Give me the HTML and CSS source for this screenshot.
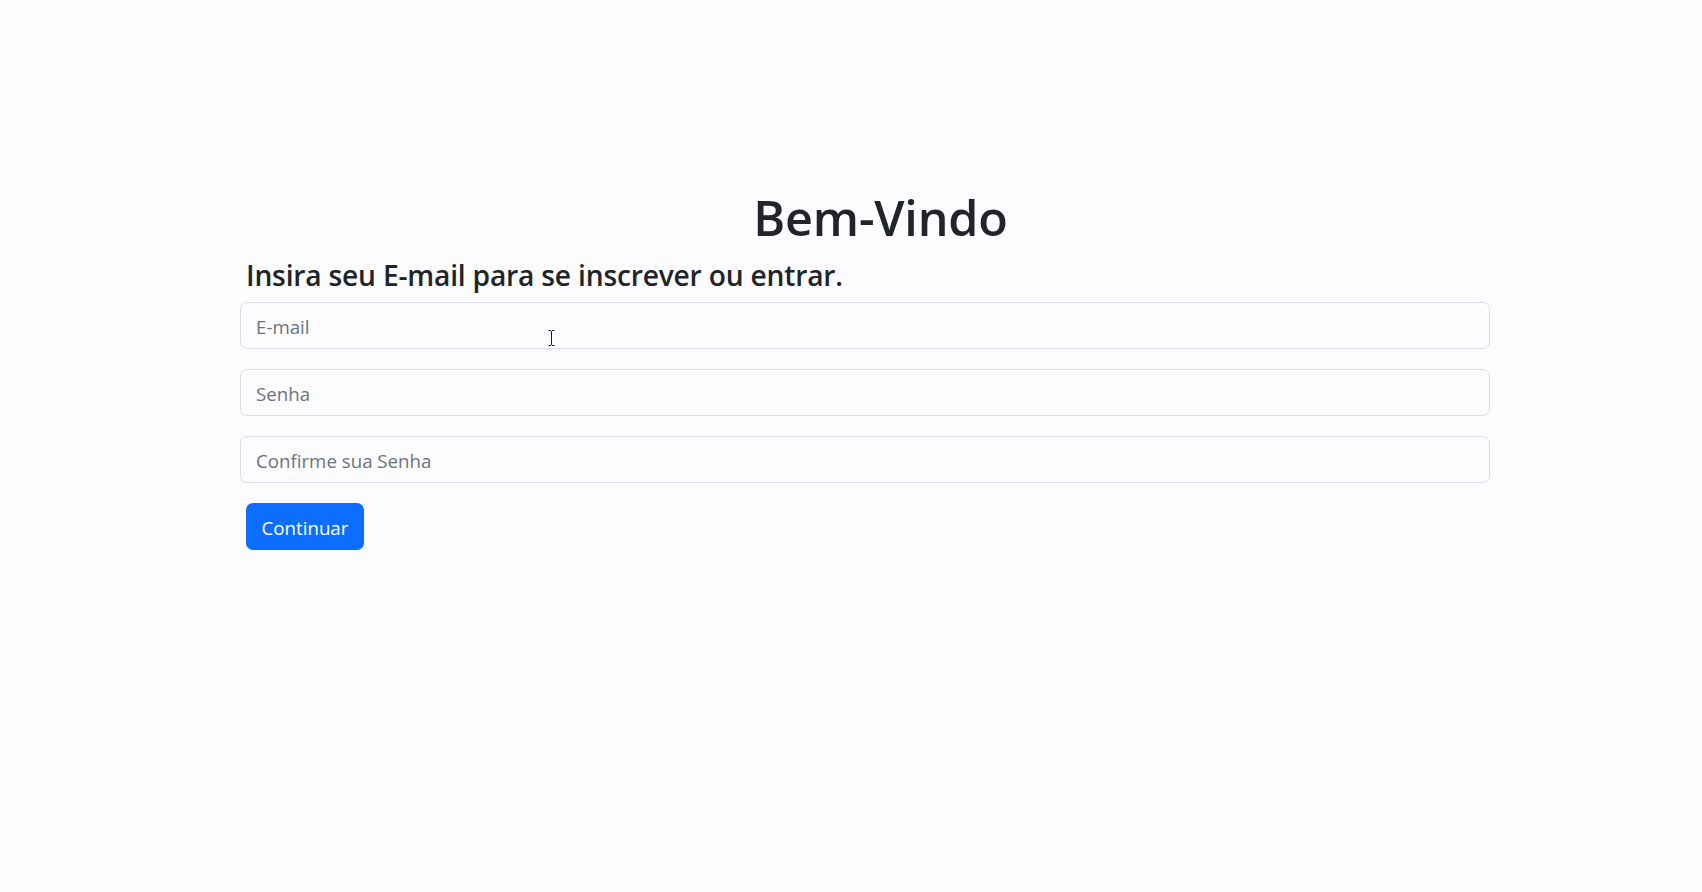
FILE: index.html
```html
<!DOCTYPE html>
<html lang="pt-BR">
<head>
<meta charset="utf-8">
<title>Bem-Vindo</title>
<link rel="stylesheet" href="styles.css">
</head>
<body>
<main class="page">
  <form class="signup">
    <h1 class="title">Bem-Vindo</h1>
    <h4 class="subtitle">Insira seu E-mail para se inscrever ou entrar.</h4>
    <div class="field"><input class="control" type="email" placeholder="E-mail"></div>
    <div class="field"><input class="control" type="password" placeholder="Senha"></div>
    <div class="field"><input class="control" type="password" placeholder="Confirme sua Senha"></div>
    <button class="btn-primary" type="button">Continuar</button>
  </form>
</main>
<svg class="cursor" width="7" height="16" viewBox="0 0 7 16" aria-hidden="true">
  <path d="M0.5 0.5h2.5M4 0.5h2.5M3.5 1v14M0.5 15.5h2.5M4 15.5h2.5" stroke="#1a1a40" stroke-width="1" fill="none"/>
</svg>
</body>
</html>
```
FILE: styles.css
```css
html, body {
  margin: 0;
  padding: 0;
}
body {
  background: #fcfcfe;
  color: #212529;
  font-family: "Open Sans", "Noto Sans", sans-serif;
  width: 1702px;
  height: 892px;
  overflow: hidden;
}
.page {
  padding-top: 187px;
  padding-left: 240px;
  width: 1250px;
}
.signup {
  display: flex;
  flex-direction: column;
  align-items: stretch;
}
.title {
  margin: 0 0 10px 0;
  padding-left: 31px;
  text-align: center;
  font-size: 48.5px;
  font-weight: 600;
  line-height: 60px;
  letter-spacing: -0.2px;
}
.subtitle {
  margin: 0 0 9px 6px;
  font-size: 28.2px;
  font-weight: 600;
  line-height: 36px;
  letter-spacing: -0.2px;
}
.field {
  margin-bottom: 20px;
}
.control {
  display: block;
  box-sizing: border-box;
  width: 100%;
  height: 47px;
  padding: 2px 15px 0 15px;
  border: 1px solid #dcdde4;
  border-radius: 7px;
  background: #fcfcfe;
  font-family: inherit;
  font-size: 18.7px;
  color: #212529;
  outline: none;
}
.control::placeholder {
  color: #6c737b;
}
.btn-primary {
  align-self: flex-start;
  margin-left: 6px;
  height: 47px;
  width: 118px;
  padding: 1px 0 0 0;
  border: none;
  border-radius: 7px;
  background: #0d6efd;
  color: #ffffff;
  font-family: inherit;
  font-size: 18.7px;
  cursor: pointer;
}
.cursor {
  position: absolute;
  left: 548px;
  top: 330px;
}
```
